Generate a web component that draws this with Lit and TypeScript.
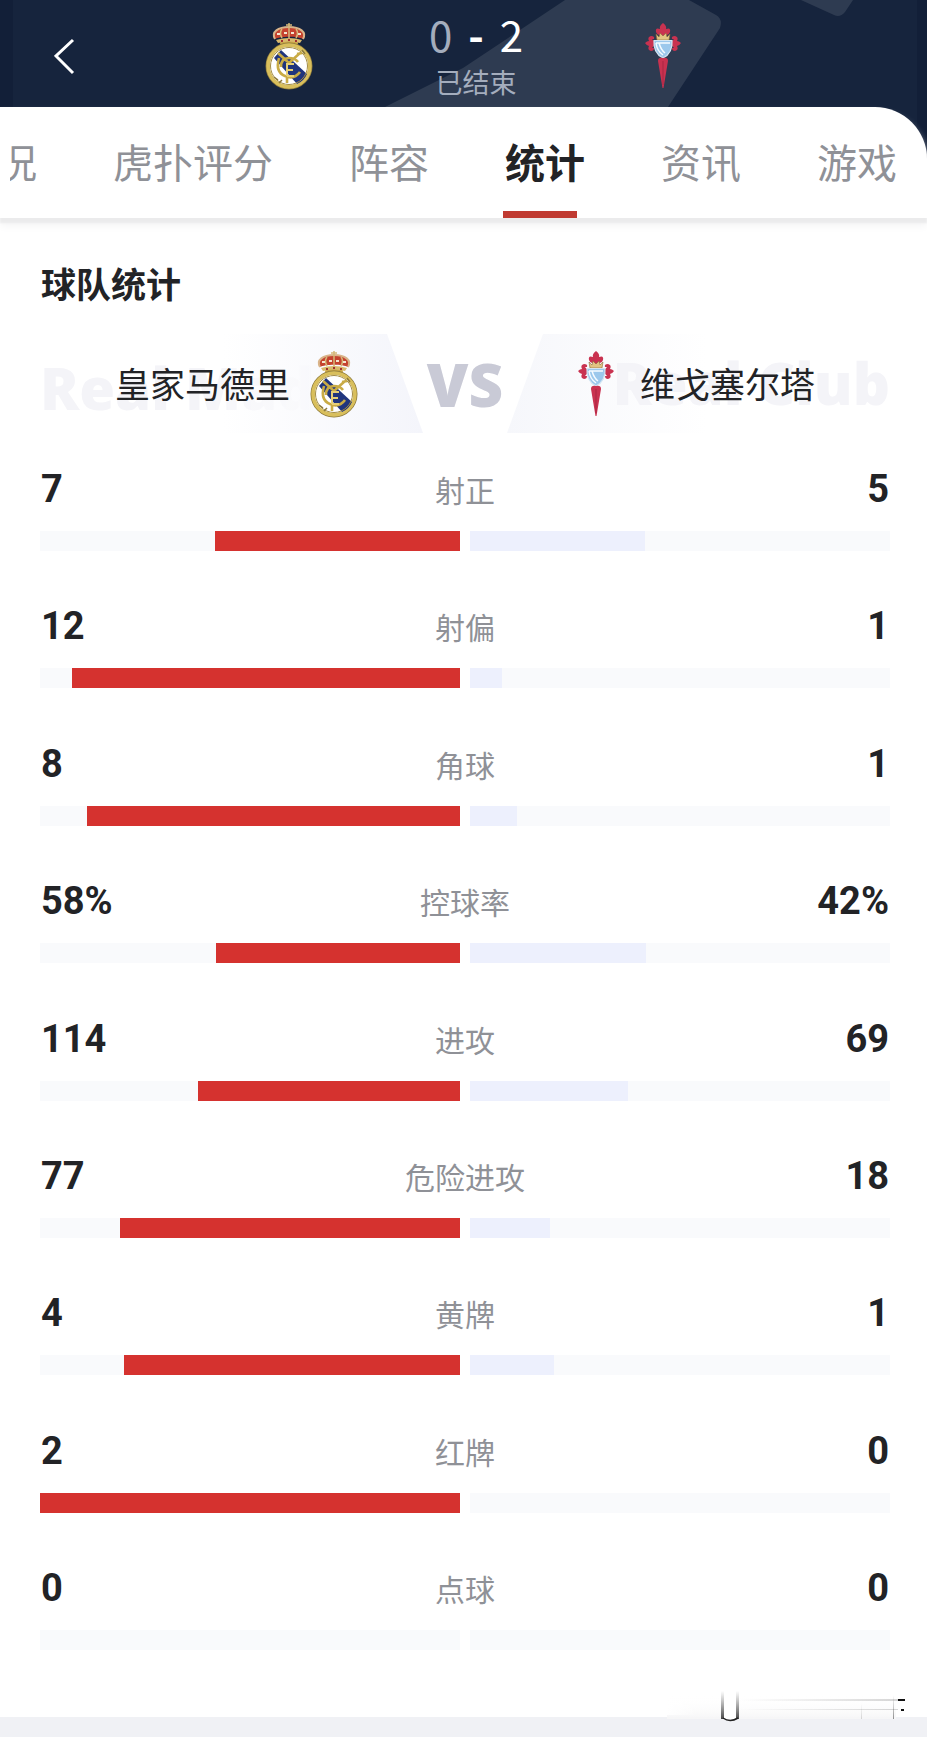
import { LitElement, html, css, svg } from "lit";
import { customElement, property } from "lit/decorators.js";
import { classMap } from "lit/directives/class-map.js";

interface Stat {
  label: string;
  home: number;
  away: number;
  unit?: string;
}

const STATS: Stat[] = [
  { label: "射正", home: 7, away: 5 },
  { label: "射偏", home: 12, away: 1 },
  { label: "角球", home: 8, away: 1 },
  { label: "控球率", home: 58, away: 42, unit: "%" },
  { label: "进攻", home: 114, away: 69 },
  { label: "危险进攻", home: 77, away: 18 },
  { label: "黄牌", home: 4, away: 1 },
  { label: "红牌", home: 2, away: 0 },
  { label: "点球", home: 0, away: 0 },
];

const TABS = ["况", "虎扑评分", "阵容", "统计", "资讯", "游戏"];

const madrid = svg`
  <path d="M15 22 L33 22 L32 17 L16 17Z" fill="#c9a545"/>
  <path d="M10 17 C6 10 13 5 24 5 C35 5 42 10 38 17 C33 14 15 14 10 17Z" fill="#c5432f"/>
  <path d="M10 17 C6 10 13 5 24 5 C35 5 42 10 38 17" fill="none" stroke="#d9b48a" stroke-width="2"/>
  <path d="M24 1 V16 M21 3 H27 M17 7 Q14 11 17 16 M31 7 Q34 11 31 16" fill="none" stroke="#d5b878" stroke-width="1.5"/>
  <path d="M12 12h3M19 11h3M26 11h3M33 12h3" stroke="#f3e6d0" stroke-width="2"/>
  <path d="M11 18 Q24 14 37 18 L35 21 Q24 18 13 21Z" fill="#d9b96c"/>
  <path d="M16 19h2M23 18h2M30 19h2" stroke="#a03030" stroke-width="2"/>
  <circle cx="24" cy="44" r="21.5" fill="#fff" stroke="#8d7a3c" stroke-width="4"/>
  <circle cx="24" cy="44" r="21" fill="none" stroke="#d9bf5c" stroke-width="3.5"/>
  <path d="M9 36 L16 28 L42 52 Q39 59 32 62Z" fill="#20357d"/>
  <circle cx="24" cy="44" r="18.5" fill="none" stroke="#a48c3f" stroke-width="1"/>
  <path d="M13 31 L24 41 L35 31 M32 32 l5 -1 M14 36 Q10 50 20 54 Q29 58 35 50 M16 45 Q16 36 24 36 Q30 36 33 40 M22 53 V61" fill="none" stroke="#c9ab45" stroke-width="2.6"/>
  <path d="M22 54 V42 H29 M22 48 H28 M22 54 H29" fill="none" stroke="#e6cf76" stroke-width="2"/>
  <path d="M9 55 l4 3 M37 28 l3 4 M14 61 l3 -3" stroke="#8d7a3c" stroke-width="1.5"/>
`;

const celta = svg`
  <path d="M24 1 Q28 4 27 7 Q32 5 31 10 Q30 13 27 13 V18 H21 V13 Q18 13 17 10 Q16 5 21 7 Q20 4 24 1Z" fill="#c93250"/>
  <path d="M6 21 Q8 19 10 19 Q8 15 12 14 Q16 14 15 17 L13 17 Q14 19 17 20 V23 Q14 24 13 26 L15 26 Q15 29 12 29 Q8 28 10 24 Q8 24 6 21Z" fill="#c93250"/>
  <path d="M42 21 Q40 19 38 19 Q40 15 36 14 Q32 14 33 17 L35 17 Q34 19 31 20 V23 Q34 24 35 26 L33 26 Q33 29 36 29 Q40 28 38 24 Q40 24 42 21Z" fill="#c93250"/>
  <path d="M18 18 L17 12 L20 15 L21 11 L24 14 L27 11 L28 15 L31 12 L30 18Z" fill="#e2c483" stroke="#8a6a3a" stroke-width=".6"/>
  <path d="M15 18.5 H33 Q34 31 24 36 Q14 31 15 18.5Z" fill="#9cc8ec" stroke="#d5e6f3" stroke-width="1.2"/>
  <path d="M17 21 Q18 29 24 33 M17 21 H31 M20 21 Q22 28 26 31" fill="none" stroke="#f6fbff" stroke-width="1.5"/>
  <path d="M24 36 Q29 35 29 39 L24.5 66 H23.5 L19 39 Q19 35 24 36Z" fill="#c93250"/>
  <path d="M24 39 V63" stroke="#a92643" stroke-width="1"/>
`;

@customElement("team-crest")
export class TeamCrest extends LitElement {
  @property() team = "madrid";

  static styles = css`
    :host {
      display: block;
      flex: none;
      width: 48px;
      height: 68px;
    }
    .crest {
      display: block;
      width: 100%;
      height: 100%;
    }
  `;

  render() {
    return html`<svg class="crest" viewBox="0 0 48 68" aria-hidden="true">
      ${this.team === "madrid" ? madrid : celta}
    </svg>`;
  }
}

@customElement("stat-row")
export class StatRow extends LitElement {
  @property({ attribute: false }) stat!: Stat;

  static styles = css`
    :host {
      display: block;
    }
    .head {
      display: grid;
      grid-template-columns: 1fr auto 1fr;
      align-items: center;
      height: 40px;
      margin-bottom: 22px;
      padding: 0 1px;
    }
    .value {
      font: 700 38px/38px Roboto, sans-serif;
      color: #222326;
      padding-bottom: 2px;
    }
    .right {
      text-align: right;
    }
    .label {
      font-size: 30px;
      line-height: 40px;
      padding-bottom: 2px;
      color: #8f9197;
    }
    .bars {
      display: grid;
      grid-template-columns: 1fr 1fr;
      gap: 10px;
    }
    .track {
      display: flex;
      height: 20px;
      background: #f9fafc;
    }
    .home {
      justify-content: flex-end;
    }
    .fill {
      background: #edf0fd;
    }
    .home .fill {
      background: #d5322f;
    }
  `;

  render() {
    const { label, home, away, unit = "" } = this.stat;
    const total = home + away || 1;
    return html`
      <div class="head">
        <span class="value">${home}${unit}</span>
        <span class="label">${label}</span>
        <span class="value right">${away}${unit}</span>
      </div>
      <div class="bars">
        <div class="track home">
          <div class="fill" style="width:${(home / total) * 100}%"></div>
        </div>
        <div class="track">
          <div class="fill" style="width:${(away / total) * 100}%"></div>
        </div>
      </div>
    `;
  }
}

@customElement("app-root")
export class AppRoot extends LitElement {
  static styles = css`
    :host {
      display: flex;
      flex-direction: column;
      min-height: 100vh;
      position: relative;
      overflow: hidden;
      background: #fff;
      color: #222326;
      font-family: "Noto Sans CJK SC", sans-serif;
    }
    .top {
      position: relative;
      background: #16243d;
    }
    .backdrop {
      position: absolute;
      top: 0;
      left: 0;
      width: 100%;
      height: 160px;
    }
    .header {
      position: relative;
      display: flex;
      align-items: center;
      box-sizing: border-box;
      height: 107px;
      padding: 5px 54px 0;
    }
    .back {
      width: 25px;
      height: 40px;
      padding: 0;
      border: 0;
      background: none;
      color: #fff;
    }
    .back-icon {
      display: block;
      width: 22px;
      height: 40px;
    }
    .match {
      flex: 1;
      display: flex;
      justify-content: center;
      align-items: center;
      gap: 98px;
    }
    .result {
      width: 130px;
      padding-top: 4px;
      text-align: center;
    }
    .score {
      display: flex;
      justify-content: center;
      gap: 16px;
      font-size: 42px;
      line-height: 48px;
      color: #fff;
    }
    .lost {
      color: #a4adbd;
    }
    .dash {
      font-weight: 700;
    }
    .state {
      font-size: 27px;
      line-height: 48px;
      color: #a4adbd;
    }
    .tabs {
      position: relative;
      height: 111px;
      background: #fff;
      border-top-right-radius: 52px;
      box-shadow: 0 5px 2px #ebebec, 0 8px 8px #f4f4f5;
      padding-left: 10px;
    }
    .scroller {
      display: flex;
      justify-content: flex-end;
      gap: 76px;
      height: 100%;
      overflow: hidden;
      padding-right: 30px;
    }
    .tab {
      position: relative;
      flex: none;
      padding: 0 0 3px;
      border: 0;
      background: none;
      font: 400 40px/108px "Noto Sans CJK SC", sans-serif;
      color: #8f9197;
    }
    .active {
      font-weight: 700;
      color: #222326;
    }
    .active::after {
      content: "";
      position: absolute;
      left: -2px;
      bottom: 0;
      width: 74px;
      height: 7px;
      background: #c03a31;
    }
    .content {
      flex: 1;
      display: flex;
      flex-direction: column;
      padding: 40px 37px 67px 40px;
    }
    .title {
      margin: 0 0 26px;
      padding-left: 1px;
      font-size: 35px;
      line-height: 50px;
      font-weight: 700;
    }
    .versus {
      position: relative;
      display: grid;
      grid-template-columns: 1fr 214px 1fr;
      align-items: center;
      height: 99px;
      margin-bottom: 36px;
    }
    .panel {
      position: absolute;
      top: 0;
      bottom: 0;
      width: 200px;
    }
    .panel-home {
      right: calc(50% + 42px);
      background: linear-gradient(to right, #fff, #f4f5fb);
      clip-path: polygon(0 0, calc(100% - 36px) 0, 100% 100%, 0 100%);
    }
    .panel-away {
      left: calc(50% + 42px);
      background: linear-gradient(to left, #fff, #f6f7fb);
      clip-path: polygon(36px 0, 100% 0, 100% 100%, 0 100%);
    }
    .ghost {
      position: absolute;
      top: 14px;
      width: 318px;
      overflow: hidden;
      display: flex;
      white-space: nowrap;
      font: 800 58px/80px "Open Sans", sans-serif;
      color: #f4f4f8;
    }
    .ghost-home {
      left: 0;
      mask-image: linear-gradient(to right, #000 50%, transparent 90%);
    }
    .ghost-away {
      right: 0;
      top: 9px;
      justify-content: flex-end;
    }
    .team {
      position: relative;
      display: flex;
      align-items: center;
      gap: 20px;
      font-size: 35px;
      line-height: 50px;
      white-space: nowrap;
    }
    .name {
      padding-bottom: 2px;
    }
    .team-home {
      justify-content: flex-end;
    }
    .vs {
      position: relative;
      text-align: center;
      font: 800 60px/80px "Open Sans", sans-serif;
      color: #c9cad6;
    }
    .stats {
      flex: 1;
      display: flex;
      flex-direction: column;
      justify-content: space-between;
    }
    .divider {
      height: 20px;
      margin-bottom: 4px;
      background: #f0f1f5;
    }
    .smear {
      position: absolute;
      right: 19px;
      bottom: 18px;
      width: 245px;
      height: 36px;
    }
  `;

  render() {
    return html`
      <div class="top">
        <svg class="backdrop" viewBox="0 0 927 160" preserveAspectRatio="none" aria-hidden="true">
          <path d="M385 107 L463 68 L565 0 H689 L716 15 Q723 19 720 28 L668 107Z" fill="#2e3b51" />
          <path d="M801 0 L834 15 Q840 18 845 12 L853 0Z" fill="#2e3b51" />
          <path d="M0 0H13V160H0Z M917 0H927V160H917Z" fill="#121f38" />
        </svg>
        <header class="header">
          <button class="back" aria-label="返回">
            <svg class="back-icon" viewBox="0 0 22 40" fill="none" stroke="currentColor" stroke-width="3">
              <path d="M19 4 L2 20 L19 37" />
            </svg>
          </button>
          <div class="match">
            <team-crest team="madrid"></team-crest>
            <div class="result">
              <div class="score"><span class="lost">0</span><span class="dash">-</span><span>2</span></div>
              <div class="state">已结束</div>
            </div>
            <team-crest team="celta"></team-crest>
          </div>
        </header>
        <nav class="tabs">
          <div class="scroller">
            ${TABS.map(
              (t) => html`<button class=${classMap({ tab: true, active: t === "统计" })}>${t}</button>`
            )}
          </div>
        </nav>
      </div>
      <main class="content">
        <h2 class="title">球队统计</h2>
        <div class="versus">
          <div class="panel panel-home"></div>
          <div class="panel panel-away"></div>
          <div class="ghost ghost-home" aria-hidden="true">Real Mad</div>
          <div class="ghost ghost-away" aria-hidden="true">Real Club</div>
          <div class="team team-home">
            <span class="name">皇家马德里</span><team-crest team="madrid"></team-crest>
          </div>
          <div class="vs">VS</div>
          <div class="team">
            <team-crest team="celta"></team-crest><span class="name">维戈塞尔塔</span>
          </div>
        </div>
        <div class="stats">${STATS.map((s) => html`<stat-row .stat=${s}></stat-row>`)}</div>
      </main>
      <div class="divider"></div>
      <svg class="smear" viewBox="0 0 245 36" aria-hidden="true">
        <defs>
          <linearGradient id="down" x1="0" y1="0" x2="0" y2="1">
            <stop offset="0" stop-color="#555" stop-opacity="0" />
            <stop offset="1" stop-color="#333" stop-opacity="0.9" />
          </linearGradient>
          <linearGradient id="across">
            <stop offset="0" stop-color="#888" stop-opacity="0" />
            <stop offset="1" stop-color="#777" stop-opacity="0.3" />
          </linearGradient>
          <linearGradient id="haze" x1="0" y1="0" x2="0" y2="1">
            <stop offset="0" stop-color="#fff" stop-opacity="0" />
            <stop offset="1" stop-color="#f6f6f7" />
          </linearGradient>
          <linearGradient id="edge">
            <stop offset="0" stop-color="#fff" />
            <stop offset="1" stop-color="#fff" stop-opacity="0" />
          </linearGradient>
        </defs>
        <rect x="4" y="8" width="229" height="24" fill="url(#haze)" />
        <rect x="4" y="8" width="30" height="20" fill="url(#edge)" />
        <rect x="60" y="8" width="15" height="24" fill="#fff" />
        <rect x="58" y="4" width="3" height="28" fill="url(#down)" />
        <rect x="73" y="4" width="3" height="28" fill="url(#down)" />
        <path d="M60 31 Q67 36 75 31" fill="none" stroke="#222" stroke-width="1.5" />
        <rect x="76" y="12" width="159" height="2" fill="url(#across)" />
        <rect x="76" y="22" width="159" height="1" fill="url(#across)" />
        <rect x="198" y="16" width="1" height="16" fill="url(#down)" opacity="0.2" />
        <rect x="230" y="8" width="1" height="24" fill="url(#down)" opacity="0.6" />
        <path d="M235 13 H242 M238 23 H241" stroke="#111" stroke-width="2" />
      </svg>
    `;
  }
}
